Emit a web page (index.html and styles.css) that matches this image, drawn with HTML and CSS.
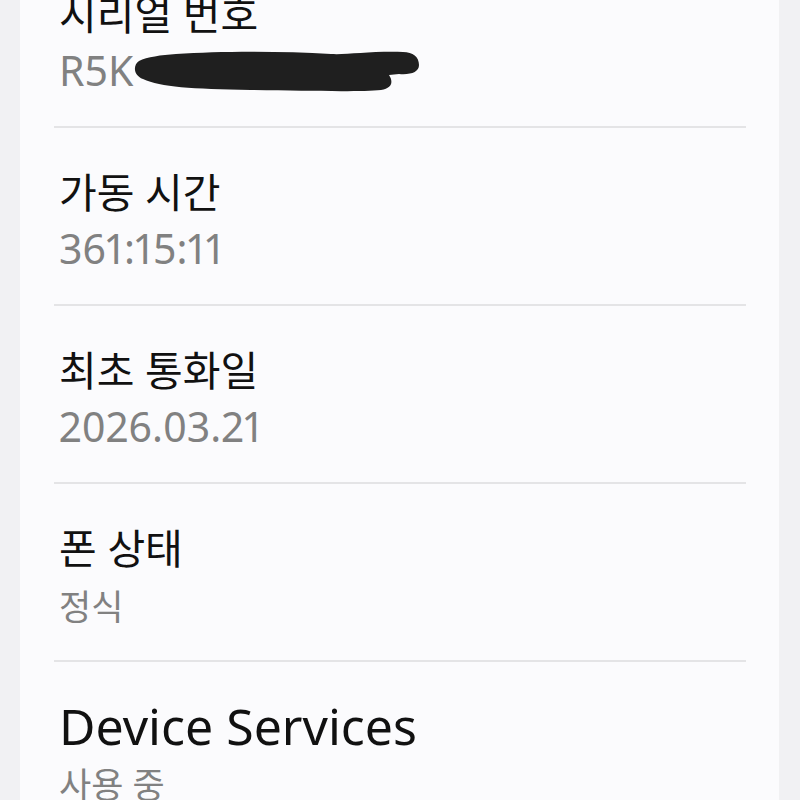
FILE: index.html
```html
<!DOCTYPE html>
<html lang="ko">
<head>
    <meta charset="UTF-8">
    <meta name="viewport" content="width=device-width, initial-scale=1.0">
    <title>휴대전화 정보</title>
    <link rel="stylesheet" href="styles.css">
</head>
<body>
    <main class="card">
        <div class="item">
            <div class="item-title">시리얼 번호</div>
            <div class="item-value serial">R5K
                <svg class="redact" viewBox="0 0 300 50" width="300" height="50">
                    <path d="M8 14 C2 18 2 28 12 32 C30 40 60 42 120 43 C180 44 230 45 250 43 C262 41 262 34 258 28 L268 27 C280 28 288 25 288 18 C288 10 282 5 272 5 C240 4 215 8 200 7 C150 4 90 4 45 7 C30 8 16 10 8 14 Z"/>
                </svg>
            </div>
        </div>
        <div class="item">
            <div class="item-title">가동 시간</div>
            <div class="item-value">361:15:11</div>
        </div>
        <div class="item">
            <div class="item-title">최초 통화일</div>
            <div class="item-value">2026.03.21</div>
        </div>
        <div class="item">
            <div class="item-title">폰 상태</div>
            <div class="item-value ko">정식</div>
        </div>
        <div class="item">
            <div class="item-title latin">Device Services</div>
            <div class="item-value ko">사용 중</div>
        </div>
    </main>
</body>
</html>
```

FILE: styles.css
```css
body {
    margin: 0;
    padding: 0;
    background-color: #f1f1f3;
    font-family: "Noto Sans", "Noto Sans CJK KR", sans-serif;
    overflow: hidden;
}
.card {
    margin: -50px 21px 0 20px;
    background: #fbfbfd;
    padding: 0 33px 0 34px;
}
.item {
    padding: 38px 0 0 5px;
    height: 138px;
    border-bottom: 2px solid #e4e4e6;
}
.item-title {
    font-size: 41px;
    line-height: 52px;
    color: #111;
}
.item-title.latin {
    font-size: 50px;
}
.item-value {
    font-size: 41px;
    line-height: 60px;
    color: #818181;
    font-variant-numeric: proportional-nums;
}
.item-value.ko {
    font-size: 35px;
    line-height: 66px;
}
.serial {
    position: relative;
}
.redact {
    position: absolute;
    left: 72px;
    top: 7px;
    fill: #1f1f1f;
}
```
